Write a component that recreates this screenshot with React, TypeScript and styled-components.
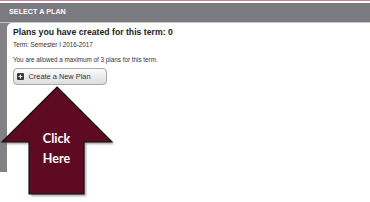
import React from "react";
import styled, { createGlobalStyle } from "styled-components";

const Global = createGlobalStyle`
  html, body { margin: 0; padding: 0; background: #ffffff; }
  body { width: 370px; height: 202px; overflow: hidden; font-family: "Liberation Sans", Arial, sans-serif; }
`;

const Page = styled.div`
  position: relative;
  width: 370px;
  height: 202px;
  background: #ffffff;
`;

const TopStripe = styled.div`
  height: 1px;
  background: #c9858f;
  margin-bottom: 2px;
`;

const Frame = styled.section`
  display: flex;
  flex-direction: column;
  background: #7b7a7f;
`;

const Header = styled.div`
  height: 20px;
  box-sizing: border-box;
  padding: 4px 0 0 9px;
  line-height: 9px;
  font-size: 7.2px;
  font-weight: 700;
  color: #ffffff;
  border-bottom: 1px solid #c4c4c4;
  letter-spacing: 0.02px;
`;

const Body = styled.div`
  display: flex;
  height: 149px;
  background: #828185;
`;

const Panel = styled.div`
  flex: 1;
  margin-left: 7px;
  background: #ffffff;
  border-top-left-radius: 5px;
  padding: 4px 6px 0 6px;
  display: flex;
  flex-direction: column;
  align-items: flex-start;
`;

const Title = styled.h2`
  margin: 0;
  font-size: 8.7px;
  line-height: 11px;
  font-weight: 700;
  color: #222222;
`;

const Note = styled.p<{ $gap: number }>`
  margin: ${(p) => p.$gap}px 0 0 0;
  font-size: 6.3px;
  line-height: 8px;
  color: #333333;
`;

const Button = styled.button`
  margin-top: 4.5px;
  width: 94px;
  height: 17px;
  box-sizing: border-box;
  display: flex;
  align-items: center;
  gap: 5px;
  padding: 0 0 0 2.5px;
  border: 1px solid #a9a9a9;
  border-radius: 4px;
  background: linear-gradient(#fafafa, #dedede);
  font-family: "Liberation Sans", Arial, sans-serif;
  font-size: 7.4px;
  color: #333333;
  cursor: pointer;
`;

const PlusIcon = styled.span`
  width: 7px;
  height: 7px;
  border-radius: 1px;
  background: #3b3b3b;
  display: flex;
  align-items: center;
  justify-content: center;
`;

const Callout = styled.div`
  position: absolute;
  left: 0;
  top: 80px;
  width: 120px;
  height: 122px;
`;

const ArrowSvg = styled.svg`
  position: absolute;
  left: 0;
  top: 0;
`;

const CalloutLabel = styled.div`
  position: absolute;
  left: 29px;
  width: 55px;
  top: 49px;
  text-align: center;
  font-family: "Lato", "Open Sans", sans-serif;
  font-weight: 700;
  font-size: 12.5px;
  line-height: 20px;
  color: #ffffff;
`;

export default function App() {
  return (
    <Page>
      <Global />
      <TopStripe />
      <Frame>
        <Header>SELECT A PLAN</Header>
        <Body>
          <Panel>
            <Title>Plans you have created for this term: 0</Title>
            <Note $gap={3}>Term: Semester I 2016-2017</Note>
            <Note $gap={6.5}>You are allowed a maximum of 3 plans for this term.</Note>
            <Button>
              <PlusIcon>
                <svg width="5" height="5" viewBox="0 0 5 5">
                  <path d="M2.5 0.6V4.4M0.6 2.5H4.4" stroke="#ffffff" strokeWidth="1.1" />
                </svg>
              </PlusIcon>
              Create a New Plan
            </Button>
          </Panel>
        </Body>
      </Frame>
      <Callout>
        <ArrowSvg width="120" height="122" viewBox="0 0 120 122">
          <defs>
            <filter id="sh" x="-20%" y="-20%" width="140%" height="140%">
              <feGaussianBlur stdDeviation="1.2" />
            </filter>
          </defs>
          <polygon
            points="59,9 114,64 86,64 86,116 31,116 31,64 4,64"
            fill="#555555"
            opacity="0.55"
            filter="url(#sh)"
          />
          <polygon
            points="57,7 112,62 84,62 84,114 29,114 29,62 2,62"
            fill="#5f0a23"
            stroke="#111111"
            strokeWidth="1.2"
            strokeLinejoin="miter"
          />
        </ArrowSvg>
        <CalloutLabel>
          Click
          <br />
          Here
        </CalloutLabel>
      </Callout>
    </Page>
  );
}
